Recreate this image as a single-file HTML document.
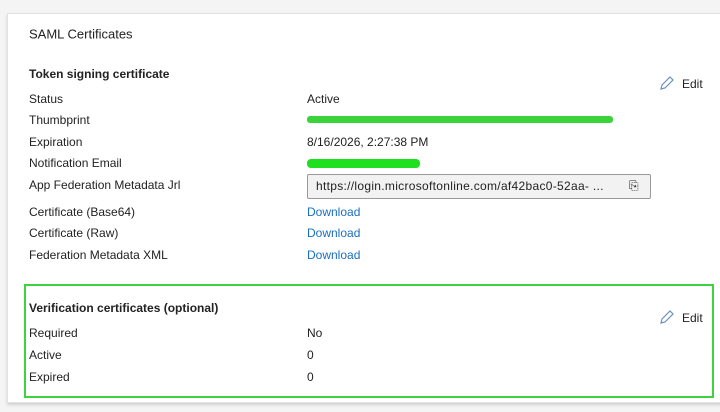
<!DOCTYPE html>
<html><head><style>
body{margin:0;width:720px;height:412px;background:#f4f4f4;font-family:"Liberation Sans",sans-serif;font-size:12px;color:#222;position:relative;overflow:hidden}
.card{position:absolute;left:7px;top:13px;width:716px;height:388px;background:#fff;border:1px solid #e2e2e2;box-shadow:0 2px 3px rgba(0,0,0,.15)}
.t{position:absolute;white-space:nowrap;transform:translateY(-50%)}
.b{font-weight:bold}
.l{color:#1a6fc0}
.green{position:absolute;left:24px;top:284px;width:686px;height:110px;border:2px solid #3fd23f}
.box{position:absolute;left:307px;top:174px;width:342px;height:23px;border:1px solid #999;background:#f2f2f2;border-radius:2px}
</style></head><body>
<div class="card"></div>
<div class="t" style="left:29px;top:34px;font-size:13px">SAML Certificates</div>
<div class="t b" style="left:29px;top:74px">Token signing certificate</div>
<div class="t" style="left:29px;top:99px">Status</div><div class="t" style="left:307px;top:99px">Active</div>
<div class="t" style="left:29px;top:120px">Thumbprint</div>
<div style="position:absolute;left:307px;top:116px;width:306px;height:7px;background:#3ad43a;border-radius:3px"></div>
<div class="t" style="left:29px;top:142px">Expiration</div><div class="t" style="left:307px;top:142px">8/16/2026, 2:27:38 PM</div>
<div class="t" style="left:29px;top:163px">Notification Email</div>
<div style="position:absolute;left:307px;top:159px;width:113px;height:9px;background:#1ee01e;border-radius:4px"></div>
<div class="t" style="left:29px;top:185px">App Federation Metadata Jrl</div>
<div class="box"></div>
<div class="t" style="left:316px;top:186px;letter-spacing:0.3px">https://login.microsoftonline.com/af42bac0-52aa- ...</div>
<div class="t" style="left:629px;top:186px">⎘</div>
<div class="t" style="left:29px;top:212px">Certificate (Base64)</div><div class="t l" style="left:307px;top:212px">Download</div>
<div class="t" style="left:29px;top:233px">Certificate (Raw)</div><div class="t l" style="left:307px;top:233px">Download</div>
<div class="t" style="left:29px;top:255px">Federation Metadata XML</div><div class="t l" style="left:307px;top:255px">Download</div>
<svg style="position:absolute;left:658px;top:76px" width="16" height="16" viewBox="0 0 16 16"><path d="M3 13l1-4 8-8 3 3-8 8z" fill="none" stroke="#6a8fbf" stroke-width="1.2"/></svg>
<div class="t" style="left:682px;top:84px">Edit</div>
<div class="green"></div>
<div class="t b" style="left:29px;top:308px">Verification certificates (optional)</div>
<div class="t" style="left:29px;top:333px">Required</div><div class="t" style="left:307px;top:333px">No</div>
<div class="t" style="left:29px;top:355px">Active</div><div class="t" style="left:307px;top:355px">0</div>
<div class="t" style="left:29px;top:377px">Expired</div><div class="t" style="left:307px;top:377px">0</div>
<svg style="position:absolute;left:658px;top:310px" width="16" height="16" viewBox="0 0 16 16"><path d="M3 13l1-4 8-8 3 3-8 8z" fill="none" stroke="#6a8fbf" stroke-width="1.2"/></svg>
<div class="t" style="left:682px;top:318px">Edit</div>
</body></html>
